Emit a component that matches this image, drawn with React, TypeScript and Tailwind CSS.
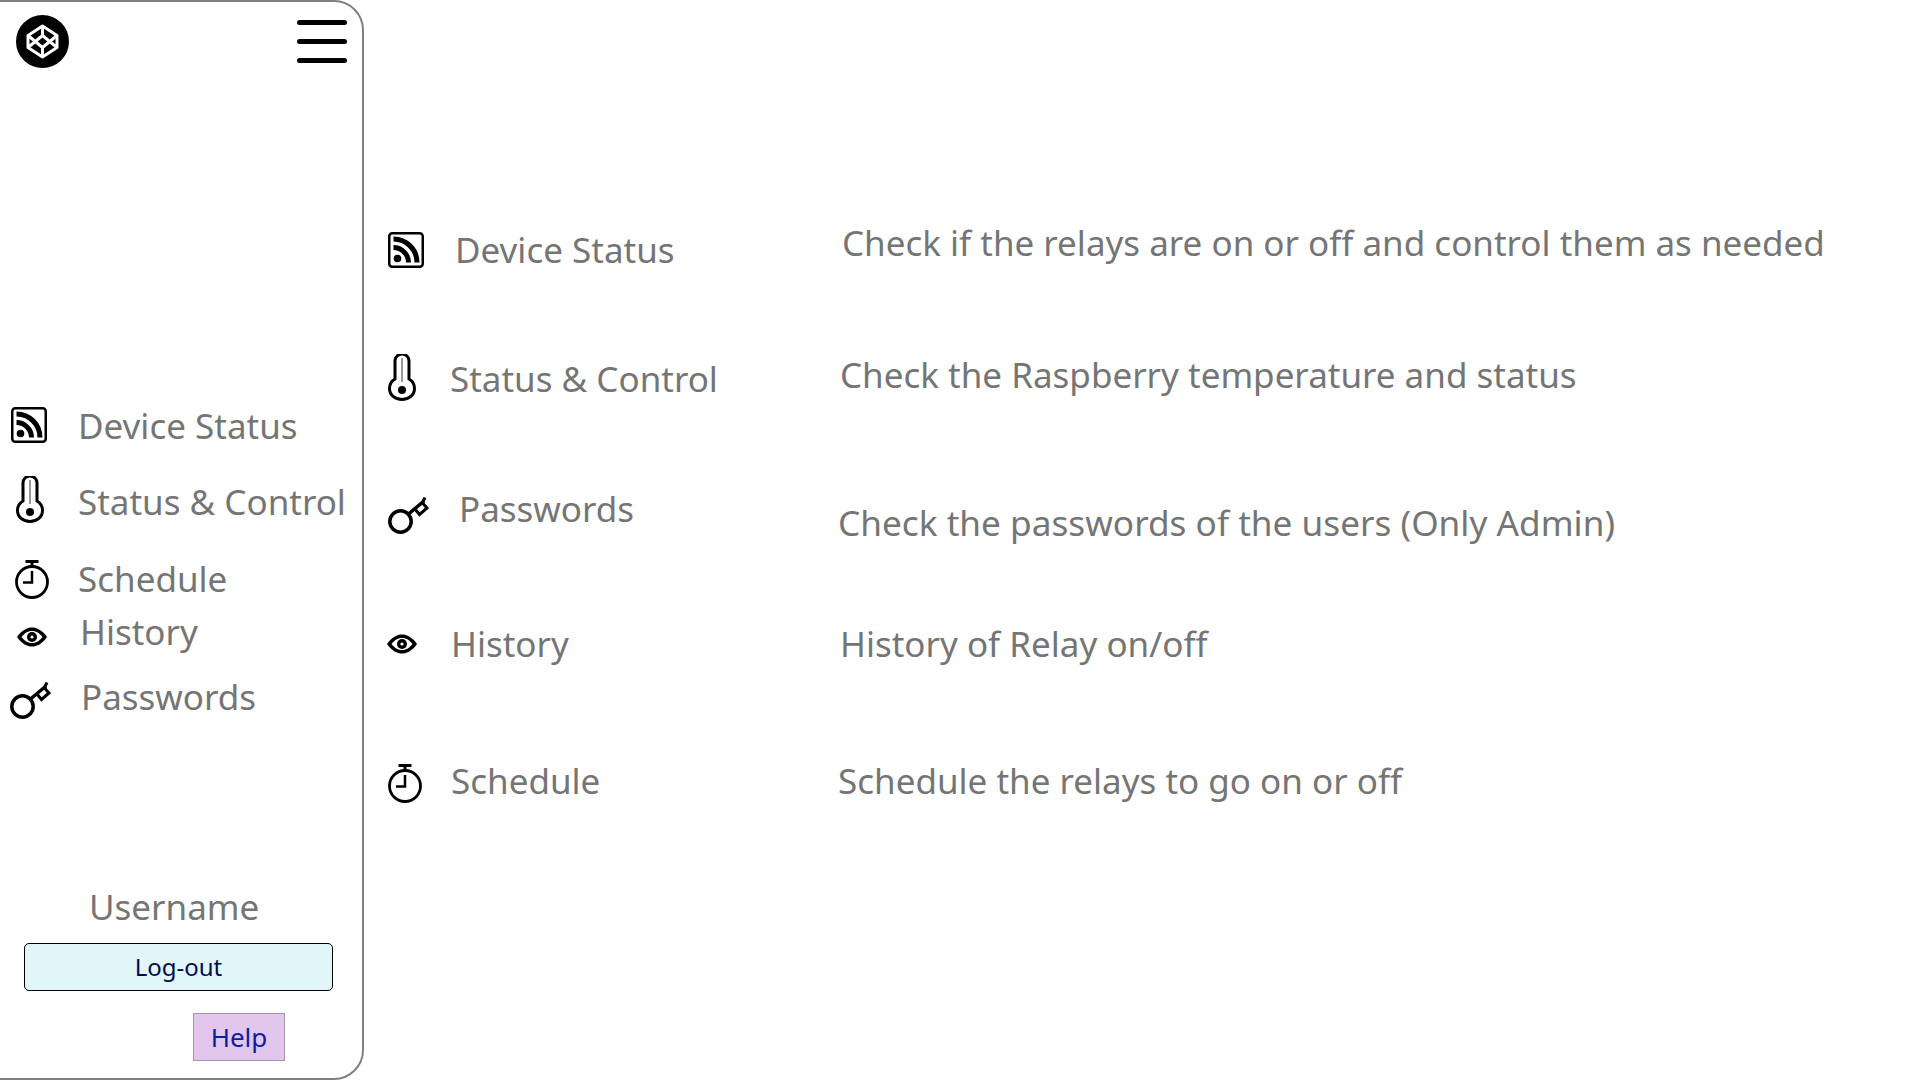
const RssBoxIcon = ({ className }: { className: string }) => (
  <svg viewBox="0 0 36 36" className={className}>
    <rect x="1.250" y="1.250" width="33.500" height="33.500" rx="3" fill="none" stroke="#000" strokeWidth="2.500" />
    <circle cx="9.500" cy="26.500" r="3.800" fill="#000" />
    <path d="M5.500 15.500a15 15 0 0 1 15 15" fill="none" stroke="#000" strokeWidth="5" />
    <path d="M5.500 7a23.500 23.500 0 0 1 23.500 23.500" fill="none" stroke="#000" strokeWidth="5" />
  </svg>
);

const ThermometerIcon = ({ className }: { className: string }) => (
  <svg viewBox="0 0 28 47" className={className}>
    <path
      d="M7 25V7a7 7 0 0 1 14 0V25c3.500 2 5.500 5.500 5.500 9.500C26.500 41 21 45.500 14 45.500S1.500 41 1.500 34.500C1.500 30.500 3.500 27 7 25Z"
      fill="none"
      stroke="#000"
      strokeWidth="3"
    />
    <path d="M14 4v24" stroke="#777" strokeWidth="1.500" />
    <circle cx="14" cy="36" r="4" fill="#000" />
  </svg>
);

const StopwatchIcon = ({ className }: { className: string }) => (
  <svg viewBox="0 0 34 39" className={className} fill="none" stroke="#000">
    <circle cx="17" cy="22" r="15.500" strokeWidth="2.800" />
    <path d="M10.500 1.500h13" strokeWidth="3" />
    <path d="M17 2v5" strokeWidth="3" />
    <path d="M17 11v11.500H8" strokeWidth="2.500" />
  </svg>
);

const EyeIcon = ({ className }: { className: string }) => (
  <svg viewBox="0 0 30 20" className={className}>
    <path d="M0 10C5 3 10 .5 15 .5S25 3 30 10c-5 7-10 9.500-15 9.500S5 17 0 10Z" fill="#000" />
    <path d="M4.500 10C8 5.500 11.500 4 15 4s7 1.500 10.500 6C22 14.500 18.500 16 15 16s-7-1.500-10.500-6Z" fill="#fff" />
    <circle cx="15" cy="10" r="5" fill="#000" />
    <circle cx="15" cy="10" r="1.600" fill="#fff" />
  </svg>
);

const KeyIcon = ({ className }: { className: string }) => (
  <svg viewBox="0 0 41 37" className={className} fill="none" stroke="#000">
    <circle cx="12.500" cy="24.500" r="10.700" strokeWidth="3.500" />
    <path d="M20.500 17 36 4" strokeWidth="3.500" />
    <path d="m27 12 4.500 5.500 7.500-6.500-4.500-5" strokeWidth="3" />
    <path d="M37 .5 35 4.500" strokeWidth="3" />
  </svg>
);

const LogoIcon = () => (
  <svg viewBox="0 0 53 53" className="w-[53px] h-[53px]" fill="none">
    <circle cx="26.500" cy="26.500" r="26.500" fill="#000" />
    <g stroke="#fff" strokeWidth="3" strokeLinejoin="round">
      <path d="M26.500 11 12 20.500v12L26.500 42 41 32.500v-12Z" />
      <path d="M26.500 20.500 12 32.500M26.500 20.500 41 32.500M26.500 32.500 12 20.500M26.500 32.500 41 20.500" />
      <path d="M26.500 11v9.500M26.500 32.500V42" />
    </g>
  </svg>
);

const sideItems = [
  { label: 'Device Status', Icon: RssBoxIcon, iconCls: 'w-9 h-9 ml-[11px] -mt-0.5', textCls: 'ml-[31px]', rowCls: '' },
  { label: 'Status & Control', Icon: ThermometerIcon, iconCls: 'w-7 h-[47px] ml-4 -mt-[6px]', textCls: 'ml-[34px]', rowCls: 'mt-8' },
  { label: 'Schedule', Icon: StopwatchIcon, iconCls: 'w-[34px] h-[39px] ml-[15px]', textCls: 'ml-[29px]', rowCls: 'mt-[33px]' },
  { label: 'History', Icon: EyeIcon, iconCls: 'w-[30px] h-5 ml-[17px] mt-1.5', textCls: 'ml-[33px] -mt-1', rowCls: 'mt-[11px]' },
  { label: 'Passwords', Icon: KeyIcon, iconCls: 'w-[41px] h-[37px] ml-2.5 mt-1.5', textCls: 'ml-[30px]', rowCls: 'mt-[19px]' },
];

const mainItems = [
  {
    label: 'Device Status',
    desc: 'Check if the relays are on or off and control them as needed',
    Icon: RssBoxIcon,
    iconCls: 'w-9 h-9 ml-[388px]',
    textCls: 'ml-[31px]',
    descCls: 'left-[842px] -mt-[14px]',
    rowCls: 'mt-[228px]',
  },
  {
    label: 'Status & Control',
    desc: 'Check the Raspberry temperature and status',
    Icon: ThermometerIcon,
    iconCls: 'w-7 h-[47px] ml-[388px] -mt-1',
    textCls: 'ml-[34px]',
    descCls: 'left-[840px] -mt-[7px]',
    rowCls: 'mt-[85px]',
  },
  {
    label: 'Passwords',
    desc: 'Check the passwords of the users (Only Admin)',
    Icon: KeyIcon,
    iconCls: 'w-[41px] h-[37px] ml-[388px] mt-2',
    textCls: 'ml-[30px] -mt-[4px]',
    descCls: 'left-[838px] mt-[22px] text-[35.2px]',
    rowCls: 'mt-[88px]',
  },
  {
    label: 'History',
    desc: 'History of Relay on/off',
    Icon: EyeIcon,
    iconCls: 'w-[30px] h-5 ml-[387px]',
    textCls: 'ml-[34px]',
    descCls: 'left-[840px]',
    rowCls: 'mt-[89px]',
  },
  {
    label: 'Schedule',
    desc: 'Schedule the relays to go on or off',
    Icon: StopwatchIcon,
    iconCls: 'w-[34px] h-[39px] ml-[388px] mt-1',
    textCls: 'ml-[29px]',
    descCls: 'left-[838px]',
    rowCls: 'mt-[93px]',
  },
];

export default function App() {
  return (
    <div className="relative w-[1920px] h-[1080px] bg-white overflow-hidden font-['Noto_Sans','Open_Sans',sans-serif] text-[35px] text-[#757575]">
      {/* Sidebar */}
      <div className="absolute top-0 left-[-2px] w-[366px] h-[1080px] border-2 border-[#808080] rounded-r-[30px]">
        <div className="flex justify-between pl-[16px] pr-[15px] pt-[13px]">
          <LogoIcon />
          <div className="flex flex-col gap-[14px] pt-[5px]">
            <div className="w-[50px] h-[5px] bg-black rounded-full" />
            <div className="w-[50px] h-[5px] bg-black rounded-full" />
            <div className="w-[50px] h-[5px] bg-black rounded-full" />
          </div>
        </div>

        <div className="mt-[336px]">
          {sideItems.map((item) => (
            <div key={item.label} className={`flex items-center h-11 ${item.rowCls}`}>
              <item.Icon className={`shrink-0 ${item.iconCls}`} />
              <span className={`whitespace-nowrap ${item.textCls}`}>{item.label}</span>
            </div>
          ))}
        </div>

        <div className="mt-[166px] pl-[89px] leading-[44px]">Username</div>
        <button className="block mt-[14px] ml-[24px] w-[309px] h-[48px] border border-black rounded-[5px] bg-[#e0f6f8] text-[24px] text-[#000c4d]">
          Log-out
        </button>
        <div className="flex items-center justify-center mt-[22px] ml-[193px] w-[92px] h-[48px] border border-[#a893b4] bg-[#e2c6ec] text-[26px] text-[#0a1f9e]">
          Help
        </div>
      </div>

      {/* Main list */}
      <div className="relative">
        {mainItems.map((item) => (
          <div key={item.label} className={`relative flex items-center h-11 ${item.rowCls}`}>
            <item.Icon className={`shrink-0 ${item.iconCls}`} />
            <span className={`whitespace-nowrap ${item.textCls}`}>{item.label}</span>
            <span className={`absolute whitespace-nowrap ${item.descCls}`}>{item.desc}</span>
          </div>
        ))}
      </div>
    </div>
  );
}
